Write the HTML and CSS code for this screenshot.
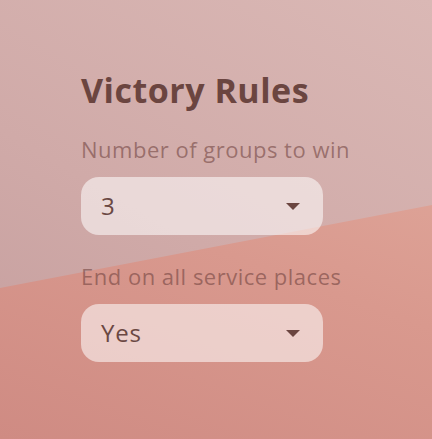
FILE: index.html
```html
<!DOCTYPE html>
<html lang="en">
<head>
<meta charset="utf-8">
<title>Victory Rules</title>
<link rel="stylesheet" href="styles.css">
</head>
<body>
<main class="panel">
  <h1 class="panel-title">Victory Rules</h1>
  <div class="field">
    <label class="field-label">Number of groups to win</label>
    <div class="select" role="combobox" aria-expanded="false">
      <span class="select-value">3</span>
      <svg class="select-caret" viewBox="0 0 14 7" width="14" height="7" aria-hidden="true"><path d="M0 0h14L7 7z"/></svg>
    </div>
  </div>
  <div class="field">
    <label class="field-label">End on all service places</label>
    <div class="select" role="combobox" aria-expanded="false">
      <span class="select-value">Yes</span>
      <svg class="select-caret" viewBox="0 0 14 7" width="14" height="7" aria-hidden="true"><path d="M0 0h14L7 7z"/></svg>
    </div>
  </div>
</main>
</body>
</html>
```
FILE: styles.css
```css
html, body {
  margin: 0;
  height: 100%;
}

body {
  position: relative;
  overflow: hidden;
  font-family: "Open Sans", "Liberation Sans", sans-serif;
  background: linear-gradient(20deg, #cf8b83 0%, #d9998e 45%, #e4b0a3 100%);
}

/* muted mauve wash over the upper part of the page, cut on a slant */
body::before {
  content: "";
  position: absolute;
  inset: 0;
  background: linear-gradient(30deg, #c49d9d 0%, #d0aaa8 45%, #dab8b5 100%);
  clip-path: polygon(0 0, 100% 0, 100% 205px, 0 288px);
  z-index: 0;
}

.panel {
  position: relative;
  z-index: 1;
  display: flex;
  flex-direction: column;
  padding: 70px 0 0 81px;
}

.panel-title {
  margin: 0 0 25px;
  font-size: 34px;
  line-height: 40px;
  font-weight: 700;
  letter-spacing: 0.5px;
  color: #6b4540;
}

.field {
  display: flex;
  flex-direction: column;
  gap: 14px;
  margin-bottom: 27px;
}

.field-label {
  font-size: 22px;
  line-height: 28px;
  letter-spacing: 0.5px;
  color: rgba(110, 64, 60, 0.58);
}

.select {
  box-sizing: border-box;
  width: 242px;
  height: 58px;
  display: flex;
  align-items: center;
  justify-content: space-between;
  padding: 0 23px 0 20px;
  border-radius: 18px;
  background: rgba(255, 255, 255, 0.55);
}

.select-value {
  font-size: 24px;
  line-height: 1;
  letter-spacing: 0.8px;
  color: #6b4843;
}

.select-caret {
  fill: #6b4540;
}
```
